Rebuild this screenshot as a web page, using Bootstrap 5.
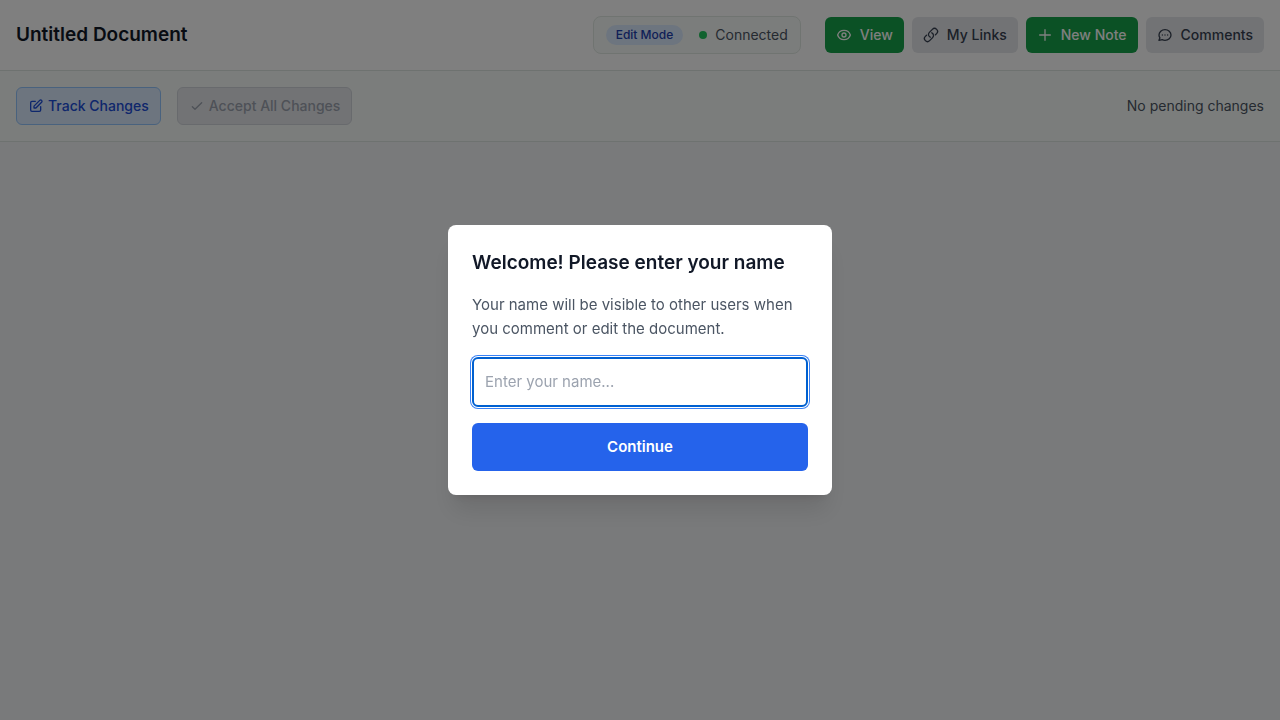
<!DOCTYPE html>
<html lang="en">
<head>
<meta charset="utf-8">
<meta name="viewport" content="width=device-width, initial-scale=1">
<title>Untitled Document</title>
<link href="https://cdn.jsdelivr.net/npm/bootstrap@5.3.0/dist/css/bootstrap.min.css" rel="stylesheet">
<style>
  body { font-family: Inter, "Liberation Sans", sans-serif; background: #f3f4f6; color: #111827; font-size: 14px; line-height: 20px; }
  h1, h2 { font-size: 19px; line-height: 28px; font-weight: 600; color: #111827; }
  .line-b { border-bottom: 1px solid #dde5e1; }
  .toolbar { background: #f7fbf8; }
  .status-box { background: #f7fbf8; border: 1px solid #e0e8e3; border-radius: 8px; padding: 8px 12px; color: #4b5563; }
  .mode-pill { background: #dbeafe; color: #1e40af; font-size: 12px; line-height: 16px; font-weight: 500; padding: 2px 10px; }
  .status-dot { width: 8px; height: 8px; background: #22c55e; }
  .btn { --bs-btn-font-size: 14px; --bs-btn-line-height: 20px; --bs-btn-font-weight: 500; --bs-btn-padding-x: 11px; --bs-btn-padding-y: 8px; --bs-btn-border-radius: 6px; }
  .btn svg { width: 16px; height: 16px; fill: none; stroke: currentColor; stroke-width: 2; stroke-linecap: round; stroke-linejoin: round; flex: none; }
  .btn-flat { --bs-btn-border-width: 0; }
  .btn-green { --bs-btn-bg: #16a34a; --bs-btn-color: #fff; --bs-btn-hover-bg: #15803d; --bs-btn-hover-color: #fff; }
  .btn-grey { --bs-btn-bg: #e5e7eb; --bs-btn-color: #374151; --bs-btn-hover-bg: #d1d5db; }
  .btn-track { --bs-btn-bg: #dbeafe; --bs-btn-color: #1d4ed8; --bs-btn-border-color: #93c5fd; --bs-btn-hover-bg: #bfdbfe; }
  .btn-accept { --bs-btn-disabled-bg: #e5e7eb; --bs-btn-disabled-color: #9ca3af; --bs-btn-disabled-border-color: #d1d5db; --bs-btn-disabled-opacity: 1; }
  .pending { color: #4b5563; }
  .veil { background: rgba(0, 0, 0, .5); z-index: 1050; }
  .welcome { max-width: 384px; border-radius: 8px; box-shadow: 0 20px 25px -5px rgba(0,0,0,.1), 0 8px 10px -6px rgba(0,0,0,.1); font-size: 15px; line-height: 24px; }
  .welcome p { color: #4b5563; }
  .name-field, .name-field:focus { border: 2px solid #0060d0; border-radius: 6px; padding: 11px; font-size: 15px; line-height: 24px; box-shadow: 0 0 0 1px #fff, 0 0 0 2px #3b82f6; }
  .name-field::placeholder { color: #9ca3af; }
  .btn-continue { --bs-btn-font-size: 15px; --bs-btn-font-weight: 600; --bs-btn-line-height: 24px; --bs-btn-padding-y: 12px; --bs-btn-bg: #2563eb; --bs-btn-color: #fff; --bs-btn-hover-bg: #1d4ed8; --bs-btn-hover-color: #fff; }
</style>
</head>
<body class="min-vh-100">
<header class="bg-white line-b p-3 d-flex align-items-center justify-content-between">
  <h1 class="m-0">Untitled Document</h1>
  <div class="d-flex align-items-center gap-4">
    <div class="status-box d-flex align-items-center gap-3">
      <span class="mode-pill rounded-pill">Edit Mode</span>
      <span class="d-flex align-items-center gap-2"><span class="status-dot rounded-circle"></span>Connected</span>
    </div>
    <div class="d-flex gap-2">
      <button type="button" class="btn btn-flat btn-green d-flex align-items-center gap-2">
        <svg viewBox="0 0 24 24" aria-hidden="true"><path d="M15 12a3 3 0 11-6 0 3 3 0 016 0z"/><path d="M2.458 12C3.732 7.943 7.523 5 12 5c4.478 0 8.268 2.943 9.542 7-1.274 4.057-5.064 7-9.542 7-4.477 0-8.268-2.943-9.542-7z"/></svg>View</button>
      <button type="button" class="btn btn-flat btn-grey d-flex align-items-center gap-2">
        <svg viewBox="0 0 24 24" aria-hidden="true"><path d="M13.19 8.688a4.5 4.5 0 0 1 1.242 7.244l-4.5 4.5a4.5 4.5 0 0 1-6.364-6.364l1.757-1.757m13.35-.622 1.757-1.757a4.5 4.5 0 0 0-6.364-6.364l-4.5 4.5a4.5 4.5 0 0 0 1.242 7.244"/></svg>My Links</button>
      <button type="button" class="btn btn-flat btn-green d-flex align-items-center gap-2">
        <svg viewBox="0 0 24 24" aria-hidden="true"><path d="M12 4v16m8-8H4"/></svg>New Note</button>
      <button type="button" class="btn btn-flat btn-grey d-flex align-items-center gap-2">
        <svg viewBox="0 0 24 24" aria-hidden="true"><path d="M8 12h.01M12 12h.01M16 12h.01M21 12c0 4.418-4.03 8-9 8a9.863 9.863 0 01-4.255-.949L3 20l1.395-3.72C3.512 15.042 3 13.574 3 12c0-4.418 4.03-8 9-8s9 3.582 9 8z"/></svg>Comments</button>
    </div>
  </div>
</header>
<section class="toolbar line-b p-3 d-flex align-items-center justify-content-between">
  <div class="d-flex gap-3">
    <button type="button" class="btn btn-track d-flex align-items-center gap-1">
      <svg viewBox="0 0 24 24" aria-hidden="true"><path d="M11 5H6a2 2 0 00-2 2v11a2 2 0 002 2h11a2 2 0 002-2v-5m-1.414-9.414a2 2 0 112.828 2.828L11.828 15H9v-2.828l8.586-8.586z"/></svg>Track Changes</button>
    <button type="button" class="btn btn-accept d-flex align-items-center gap-1" disabled>
      <svg viewBox="0 0 24 24" aria-hidden="true"><path d="M5 13l4 4L19 7"/></svg>Accept All Changes</button>
  </div>
  <span class="pending">No pending changes</span>
</section>
<div class="veil position-fixed top-0 start-0 w-100 h-100 d-flex align-items-center justify-content-center">
  <form class="welcome bg-white w-100 p-4" role="dialog" aria-modal="true" aria-labelledby="welcome-title">
    <h2 class="mb-3" id="welcome-title">Welcome! Please enter your name</h2>
    <p class="mb-3">Your name will be visible to other users when you comment or edit the document.</p>
    <input type="text" class="form-control name-field mb-3" aria-label="Your name" placeholder="Enter your name...">
    <button type="button" class="btn btn-flat btn-continue w-100">Continue</button>
  </form>
</div>
<script src="https://cdn.jsdelivr.net/npm/bootstrap@5.3.0/dist/js/bootstrap.bundle.min.js"></script>
</body>
</html>
